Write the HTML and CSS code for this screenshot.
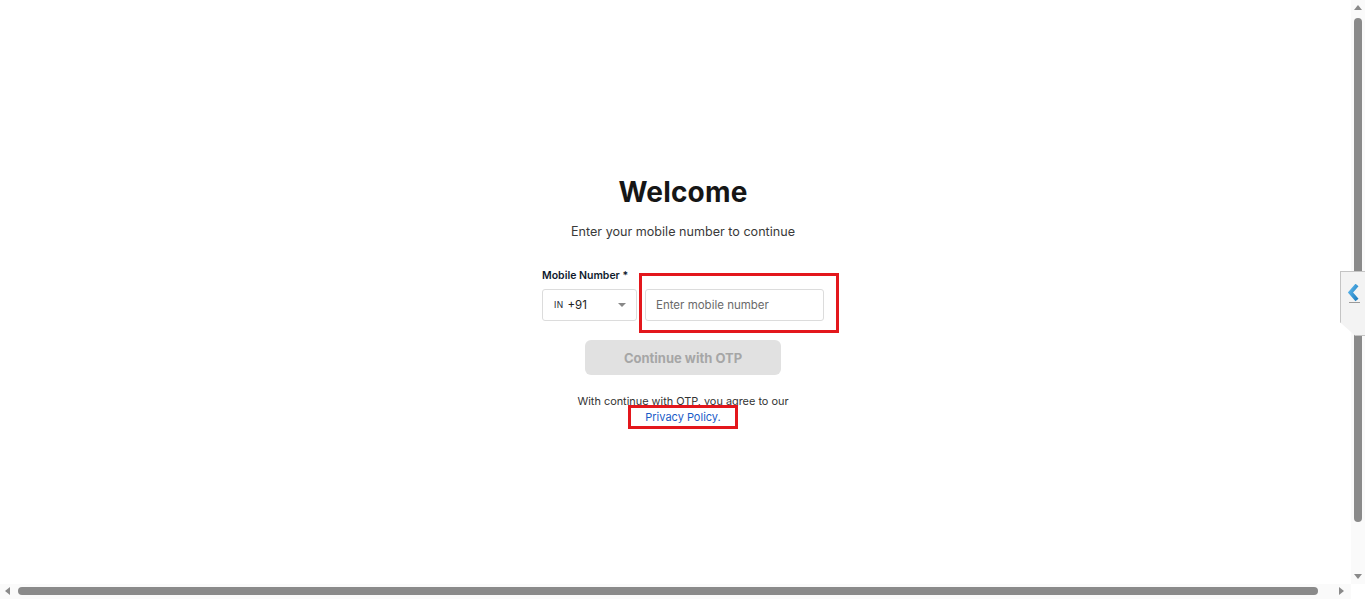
FILE: index.html
```html
<!DOCTYPE html>
<html lang="en">
<head>
  <meta charset="UTF-8">
  <meta name="viewport" content="width=device-width, initial-scale=1.0">
  <title>Login</title>
  <link rel="stylesheet" href="styles.css">
</head>
<body>
  <main class="page">
    <div class="login">
      <h1>Welcome</h1>
      <p class="subtitle">Enter your mobile number to continue</p>

      <div class="field">
        <label class="field-label">Mobile Number *</label>
        <div class="phone-row">
          <div class="country">
            <span class="flag">IN</span>
            <span class="code">+91</span>
            <span class="caret"></span>
          </div>
          <div class="input-wrap">
            <input type="text" placeholder="Enter mobile number">
          </div>
        </div>
      </div>

      <button class="otp-btn" disabled>Continue with OTP</button>

      <p class="terms">With continue with OTP, you agree to our</p>
      <a class="policy" href="#">Privacy Policy.</a>
    </div>
  </main>

  <div class="vscroll">
    <span class="arrow up"></span>
    <span class="thumb"></span>
    <span class="arrow down"></span>
  </div>
  <div class="hscroll">
    <span class="arrow left"></span>
    <span class="thumb"></span>
    <span class="arrow right"></span>
  </div>

  <div class="side-tab">
    <svg width="14" height="20" viewBox="0 0 14 20">
      <defs>
        <linearGradient id="chev" x1="0" y1="0" x2="1" y2="1">
          <stop offset="0" stop-color="#5ab4ea"/>
          <stop offset="1" stop-color="#1f7fc0"/>
        </linearGradient>
      </defs>
      <path d="M10 1 L3.5 8.5 L10 16" fill="none" stroke="url(#chev)" stroke-width="4"/>
      <path d="M2 18.5 H13" stroke="#9a9a9a" stroke-width="1"/>
    </svg>
  </div>
</body>
</html>
```

FILE: styles.css
```css
html, body {
  margin: 0;
  height: 100%;
  overflow: hidden;
}
body {
  font-family: Inter, "Noto Sans", sans-serif;
  background-color: #fff;
  color: #1a1a1a;
}
.page {
  display: flex;
  justify-content: center;
  padding-top: 174px;
  padding-left: 1px;
}
.login {
  width: 282px;
  display: flex;
  flex-direction: column;
  align-items: center;
}
.login h1 {
  margin: 0;
  font-size: 28px;
  font-weight: 700;
  line-height: 36px;
  letter-spacing: 0.2px;
  color: #161616;
}
.subtitle {
  margin: 13px 0 0;
  font-size: 12.6px;
  line-height: 18px;
  color: #3a3a3a;
}
.field {
  align-self: stretch;
  margin-top: 28px;
}
.field-label {
  display: block;
  font-size: 10.5px;
  font-weight: 600;
  line-height: 14px;
  color: #0f1a2e;
  margin-bottom: 6px;
}
.phone-row {
  display: flex;
  gap: 8px;
}
.country {
  flex: none;
  width: 95px;
  height: 32px;
  box-sizing: border-box;
  border: 1px solid #dcdcdc;
  border-radius: 3px;
  display: flex;
  align-items: center;
  padding: 0 10px 0 11px;
  font-size: 11.5px;
  color: #222;
}
.flag {
  font-size: 8.5px;
  letter-spacing: 0.4px;
  margin-right: 4px;
  color: #1a1a33;
}
.caret {
  margin-left: auto;
  width: 0;
  height: 0;
  border-left: 4.5px solid transparent;
  border-right: 4.5px solid transparent;
  border-top: 4.5px solid #888;
}
.input-wrap {
  flex: none;
  outline: 3px solid #e3171c;
  padding: 13px 12px 9px 3px;
  margin: -13px 0 -9px -3px;
}
.input-wrap input {
  display: block;
  width: 179px;
  height: 32px;
  box-sizing: border-box;
  border: 1px solid #dcdcdc;
  border-radius: 3px;
  padding: 0 10px;
  font-family: inherit;
  font-size: 11.5px;
  color: #222;
}
.input-wrap input::placeholder {
  color: #6a6a6a;
}
.otp-btn {
  margin-top: 19px;
  width: 196px;
  height: 35px;
  border: none;
  border-radius: 6px;
  background-color: #e1e1e1;
  color: #a6a6a6;
  font-family: inherit;
  font-size: 13px;
  font-weight: 700;
}
.terms {
  margin: 19px 0 0;
  font-size: 10.9px;
  line-height: 14px;
  color: #333;
}
.policy {
  margin-top: 0;
  padding: 0 14px;
  font-size: 11px;
  line-height: 18px;
  color: #1a5cc8;
  text-decoration: none;
  outline: 3px solid #e3171c;
}
.side-tab {
  position: fixed;
  top: 271px;
  right: 0;
  z-index: 2;
  width: 25px;
  height: 65px;
  box-sizing: border-box;
  background-color: #f3f3f3;
  border: 1px solid #c4c4c4;
  border-right: none;
  clip-path: polygon(0 0, 100% 0, 100% 100%, 62% 100%, 0 79%);
  display: flex;
  justify-content: center;
  padding-top: 12px;
  padding-left: 2px;
}
.side-tab svg {
  flex: none;
}
.vscroll {
  position: fixed;
  top: 0;
  right: 0;
  width: 14px;
  height: 584px;
  background-color: #fafafa;
}
.vscroll .thumb {
  position: absolute;
  top: 18px;
  left: 3px;
  width: 8px;
  height: 504px;
  border-radius: 4px;
  background-color: #8a8a8a;
}
.hscroll {
  position: fixed;
  left: 0;
  bottom: 0;
  width: 1351px;
  height: 15px;
  background-color: #fafafa;
}
.hscroll .thumb {
  position: absolute;
  left: 18px;
  top: 3px;
  width: 1300px;
  height: 8px;
  border-radius: 4px;
  background-color: #8a8a8a;
}
.arrow {
  position: absolute;
  width: 0;
  height: 0;
}
.arrow.up {
  top: 5px;
  left: 3px;
  border-left: 4px solid transparent;
  border-right: 4px solid transparent;
  border-bottom: 5px solid #8a8a8a;
}
.arrow.down {
  bottom: 5px;
  left: 3px;
  border-left: 4px solid transparent;
  border-right: 4px solid transparent;
  border-top: 5px solid #8a8a8a;
}
.arrow.left {
  top: 3px;
  left: 5px;
  border-top: 4px solid transparent;
  border-bottom: 4px solid transparent;
  border-right: 5px solid #8a8a8a;
}
.arrow.right {
  top: 3px;
  right: 7px;
  border-top: 4px solid transparent;
  border-bottom: 4px solid transparent;
  border-left: 5px solid #8a8a8a;
}
```
